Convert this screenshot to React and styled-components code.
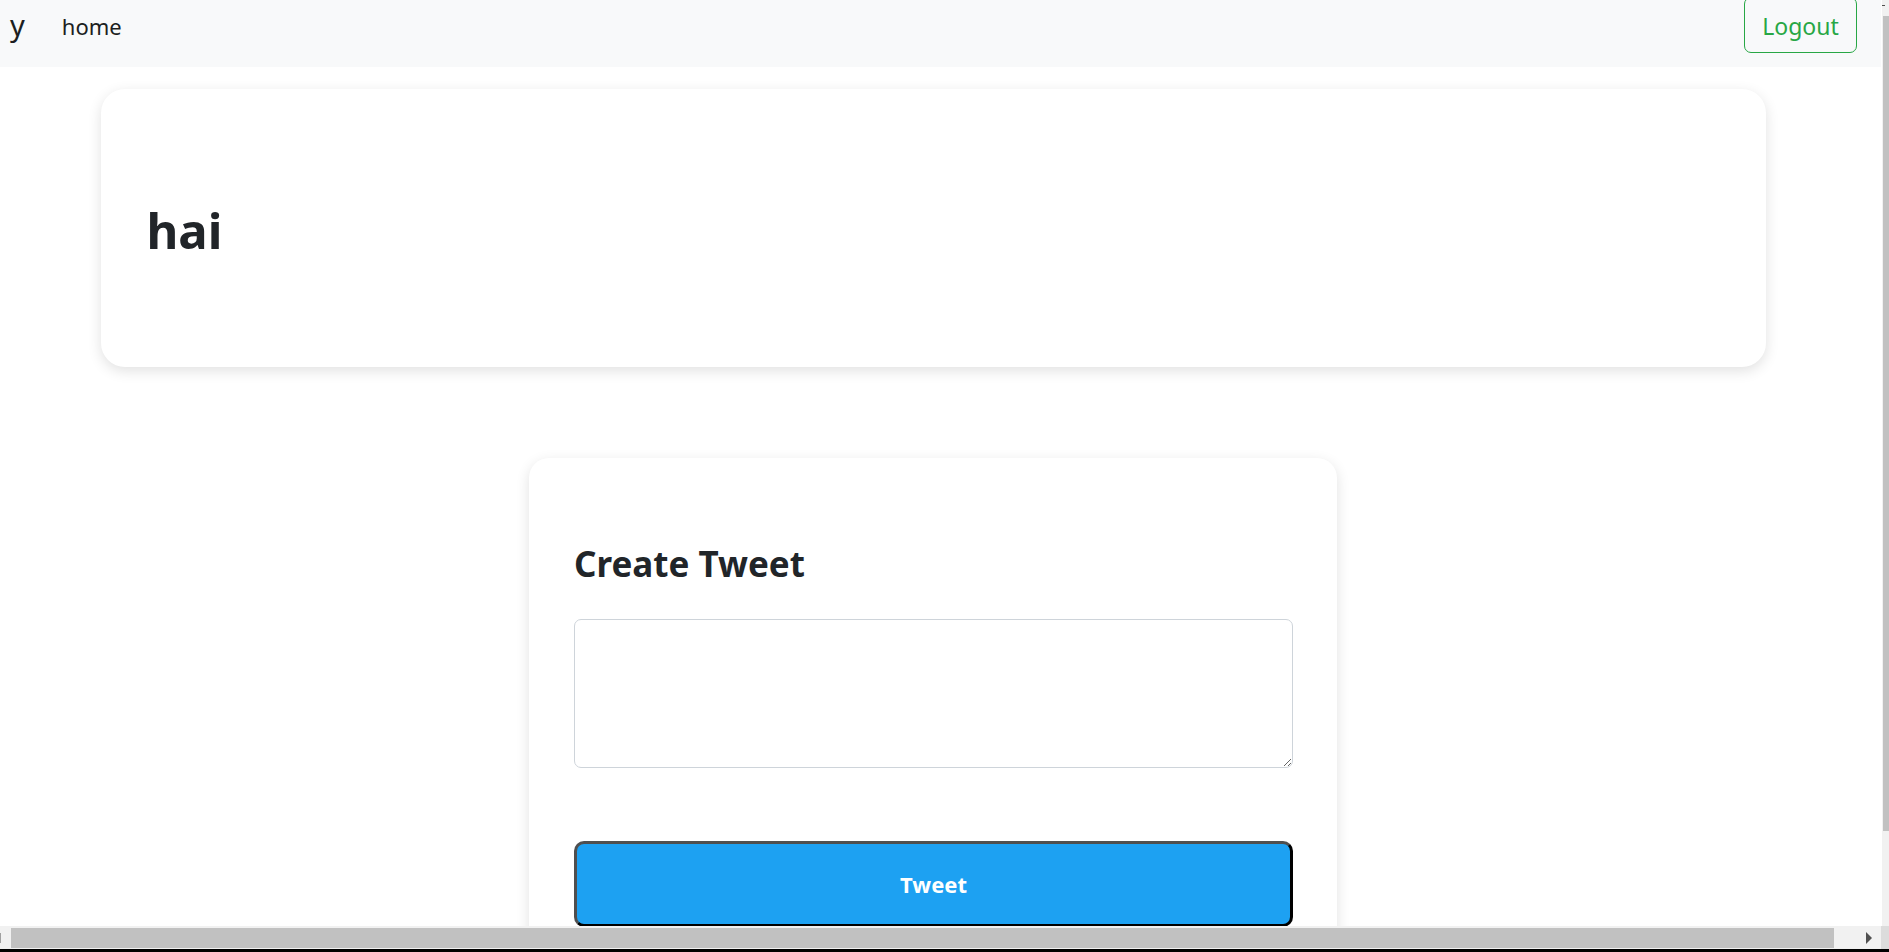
import React from 'react'
import styled, { createGlobalStyle } from 'styled-components'

const GlobalStyle = createGlobalStyle`
  body {
    margin: 0;
    background: #fff;
    color: #212529;
    font-family: 'Noto Sans', 'Open Sans', sans-serif;
    overflow: hidden;
  }
`

const App = () => (
  <>
    <GlobalStyle />
    <Nav>
      <Left>
        <Brand>y</Brand>
        <NavLink>home</NavLink>
      </Left>
      <Logout>Logout</Logout>
    </Nav>

    <Main>
      <Hero>
        <H1>hai</H1>
      </Hero>

      <Card>
        <H2>Create Tweet</H2>
        <TextArea />
        <TweetButton>Tweet</TweetButton>
      </Card>
    </Main>

    <VScroll>
      <VArrow />
      <VThumb />
    </VScroll>
    <HScroll>
      <HTrack>
        <HArrowLeft />
        <HThumb />
        <HArrowRight>
          <svg width="6" height="12" viewBox="0 0 6 12">
            <path d="M0 0 L6 6 L0 12 Z" fill="#505050" />
          </svg>
        </HArrowRight>
        <Corner />
      </HTrack>
      <HEdge />
    </HScroll>
  </>
)

const Nav = styled.nav`
  height: 67px;
  background: #f8f9fa;
  display: flex;
  justify-content: space-between;
  align-items: flex-start;
  padding: 0 24px 0 10px;
  width: 1881px;
  box-sizing: border-box;
`
const Left = styled.div`
  display: flex;
  align-items: baseline;
  gap: 37px;
  padding-top: 5px;
`
const Brand = styled.span`
  font-size: 29px;
  line-height: 40px;
  color: #1c1e21;
`
const NavLink = styled.span`
  font-size: 22px;
  color: #1c1e21;
  position: relative;
  top: -1px;
`
const Logout = styled.button`
  margin-top: -3px;
  height: 56px;
  width: 113px;
  padding: 2px 0 0;
  font-family: inherit;
  font-size: 23px;
  color: #28a745;
  background: transparent;
  border: 1px solid #28a745;
  border-radius: 7px;
`
const Main = styled.main`
  width: 1866px;
  display: flex;
  flex-direction: column;
  align-items: center;
`
const Hero = styled.section`
  margin-top: 22px;
  width: 1665px;
  height: 278px;
  box-sizing: border-box;
  padding: 4px 46px 0;
  display: flex;
  align-items: center;
  background: #fff;
  border-radius: 24px;
  box-shadow: 0 4px 14px rgba(0, 0, 0, 0.12);
`
const H1 = styled.h1`
  margin: 0;
  font-size: 49px;
  font-weight: 700;
  line-height: 1.2;
`
const Card = styled.section`
  margin-top: 91px;
  width: 808px;
  box-sizing: border-box;
  padding: 85px 44px 40px 45px;
  background: #fff;
  border-radius: 20px;
  box-shadow: 0 4px 14px rgba(0, 0, 0, 0.12);
  display: flex;
  flex-direction: column;
`
const H2 = styled.h2`
  margin: 0 0 34px;
  font-size: 35px;
  font-weight: 700;
  line-height: 1.2;
`
const TextArea = styled.textarea`
  height: 149px;
  box-sizing: border-box;
  border: 1px solid #ced4da;
  border-radius: 7px;
  font-family: inherit;
  font-size: 20px;
  padding: 8px 14px;
`
const TweetButton = styled.button`
  margin-top: 73px;
  height: 86px;
  background: #1da1f2;
  color: #fff;
  font-family: inherit;
  font-size: 22px;
  font-weight: 700;
  border: 3px solid #000;
  border-top-color: #4f4f4f;
  border-left-color: #4f4f4f;
  border-radius: 10px;
`
const VScroll = styled.div`
  position: fixed;
  top: 0;
  right: 0;
  bottom: 26px;
  width: 7px;
  background: #f1f1f1;
  display: flex;
  flex-direction: column;
  align-items: flex-end;
`
const VArrow = styled.div`
  margin: 5px 0 0 0;
  align-self: flex-start;
  width: 3px;
  height: 1px;
  background: #505050;
`
const VThumb = styled.div`
  margin-top: 10px;
  width: 6px;
  height: 815px;
  background: #c1c1c1;
`
const HScroll = styled.div`
  position: fixed;
  left: 0;
  right: 0;
  bottom: 0;
  height: 26px;
  display: flex;
  flex-direction: column;
`
const HTrack = styled.div`
  height: 23px;
  background: #f1f1f1;
  display: flex;
  align-items: center;
`
const HArrowLeft = styled.div`
  width: 1px;
  height: 10px;
  background: #a0a0a0;
  margin-right: 10px;
`
const HThumb = styled.div`
  width: 1823px;
  height: 20px;
  background: #c1c1c1;
`
const HArrowRight = styled.div`
  display: flex;
  margin-left: 32px;
  width: 15px;
`
const Corner = styled.div`
  align-self: stretch;
  margin-left: auto;
  width: 8px;
  background: #dcdcdc;
`
const HEdge = styled.div`
  height: 3px;
  background: #000;
`

export default App
